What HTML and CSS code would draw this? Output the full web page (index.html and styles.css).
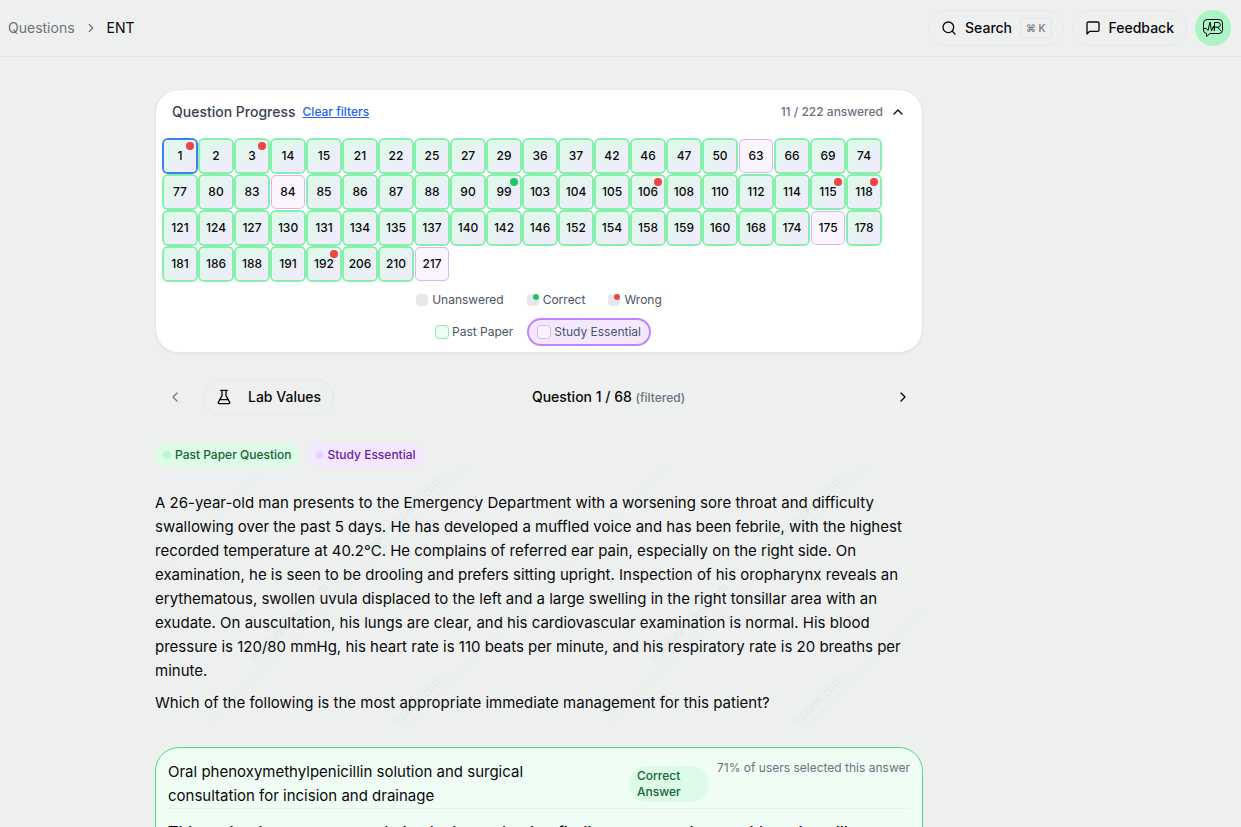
FILE: index.html
```html
<!DOCTYPE html>
<html lang="en">
<head>
  <meta charset="UTF-8">
  <meta name="viewport" content="width=device-width, initial-scale=1.0">
  <title>ENT Questions</title>
  <link rel="stylesheet" href="styles.css">
</head>
<body>
  <header class="topbar">
    <nav class="breadcrumb" aria-label="Breadcrumb">
      <a href="#">Questions</a>
      <svg class="icon-sm" viewBox="0 0 24 24"><path d="m9 18 6-6-6-6"/></svg>
      <span class="current">ENT</span>
    </nav>
    <div class="topbar-actions">
      <button type="button" class="btn search-btn">
        <svg class="icon" viewBox="0 0 24 24"><circle cx="11" cy="11" r="8"/><path d="m21 21-4.3-4.3"/></svg>
        Search
        <kbd>⌘ K</kbd>
      </button>
      <button type="button" class="btn feedback-btn">
        <svg class="icon" viewBox="0 0 24 24"><path d="M21 15a2 2 0 0 1-2 2H7l-4 4V5a2 2 0 0 1 2-2h14a2 2 0 0 1 2 2z"/></svg>
        Feedback
      </button>
      <button type="button" class="avatar" aria-label="Account">
        <svg viewBox="0 0 22 20">
          <path d="M5 1.500h12a3.500 3.500 0 0 1 3.500 3.500v7a3.500 3.500 0 0 1-3.500 3.500H8L4.500 18.500v-3A3.500 3.500 0 0 1 1.500 12V5A3.500 3.500 0 0 1 5 1.500z"/>
          <path d="M2 10.500h2.500L6 12.500 8 4l1.500 9L11.500 8l1 5V4.500h3.500a2.300 2.300 0 0 1 0 4.700h-3M15.500 9.200l3.500 3.800"/>
        </svg>
      </button>
    </div>
  </header>

  <main class="page">
    <section class="card progress">
      <div class="progress-head">
        <h2>Question Progress</h2>
        <a href="#" class="clear">Clear filters</a>
        <span class="answered">11 / 222 answered</span>
        <button type="button" class="toggle" aria-label="Collapse">
          <svg class="icon" viewBox="0 0 24 24"><path d="m18 15-6-6-6 6"/></svg>
        </button>
      </div>
      <div id="questionGrid" class="question-grid"></div>
      <div class="legend">
        <span class="legend-item"><i class="swatch"></i>Unanswered</span>
        <span class="legend-item"><i class="swatch correct"></i>Correct</span>
        <span class="legend-item"><i class="swatch wrong"></i>Wrong</span>
      </div>
      <div class="legend filters">
        <button type="button" class="filter"><i class="swatch paper"></i>Past Paper</button>
        <button type="button" class="filter active"><i class="swatch essential"></i>Study Essential</button>
      </div>
    </section>

    <div class="question-nav">
      <div class="nav-left">
        <button type="button" class="arrow" aria-label="Previous question" disabled>
          <svg class="icon" viewBox="0 0 24 24"><path d="m15 18-6-6 6-6"/></svg>
        </button>
        <button type="button" class="btn lab-btn">
          <svg class="icon" viewBox="0 0 24 24"><path d="M7 2h10M9 2v8L3.500 20a1.500 1.500 0 0 0 1.300 2h14.400a1.500 1.500 0 0 0 1.300-2L15 10V2M6 16h12"/></svg>
          Lab Values
        </button>
      </div>
      <h1>Question 1 / 68 <small>(filtered)</small></h1>
      <button type="button" class="arrow" aria-label="Next question">
        <svg class="icon" viewBox="0 0 24 24"><path d="m9 18 6-6-6-6"/></svg>
      </button>
    </div>

    <div class="tags">
      <span class="tag tag-paper">Past Paper Question</span>
      <span class="tag tag-essential">Study Essential</span>
    </div>

    <article class="question">
      <svg class="watermark" aria-hidden="true">
        <defs>
          <pattern id="mark" width="400" height="200" patternUnits="userSpaceOnUse">
            <text transform="translate(252 50) rotate(-45)">medrevisions.com</text>
            <text transform="translate(137 158) rotate(-45)">medrevisions.com</text>
            <path d="M0 113 113 0M113 200 313 0M313 200 400 113"/>
          </pattern>
        </defs>
        <rect width="100%" height="100%" fill="url(#mark)"/>
      </svg>
      <p>A 26-year-old man presents to the Emergency Department with a worsening sore throat and difficulty swallowing over the past 5 days. He has developed a muffled voice and has been febrile, with the highest recorded temperature at 40.2°C. He complains of referred ear pain, especially on the right side. On examination, he is seen to be drooling and prefers sitting upright. Inspection of his oropharynx reveals an erythematous, swollen uvula displaced to the left and a large swelling in the right tonsillar area with an exudate. On auscultation, his lungs are clear, and his cardiovascular examination is normal. His blood pressure is 120/80 mmHg, his heart rate is 110 beats per minute, and his respiratory rate is 20 breaths per minute.</p>
      <p>Which of the following is the most appropriate immediate management for this patient?</p>
    </article>

    <section class="answer">
      <div class="answer-head">
        <h3>Oral phenoxymethylpenicillin solution and surgical consultation for incision and drainage</h3>
        <span class="answer-badge">Correct Answer</span>
        <span class="percent">71% of users selected this answer</span>
      </div>
      <p class="explanation">This patient's symptoms and physical examination findings are consistent with peritonsillar abscess, also known as quinsy.</p>
    </section>
  </main>

  <script>
    const questions = [
      1, 2, 3, 14, 15, 21, 22, 25, 27, 29, 36, 37, 42, 46, 47, 50, 63, 66, 69, 74,
      77, 80, 83, 84, 85, 86, 87, 88, 90, 99, 103, 104, 105, 106, 108, 110, 112, 114, 115, 118,
      121, 124, 127, 130, 131, 134, 135, 137, 140, 142, 146, 152, 154, 158, 159, 160, 168, 174, 175, 178,
      181, 186, 188, 191, 192, 206, 210, 217
    ];
    const essentialOnly = [63, 84, 175, 217];
    const wrong = [1, 3, 106, 115, 118, 192];
    const correct = [99];

    const grid = document.getElementById('questionGrid');
    questions.forEach(number => {
      const cell = document.createElement('button');
      cell.type = 'button';
      cell.className = 'cell';
      cell.textContent = number;
      if (essentialOnly.includes(number)) cell.classList.add('essential');
      if (wrong.includes(number)) cell.classList.add('wrong');
      if (correct.includes(number)) cell.classList.add('correct');
      if (number === 1) cell.classList.add('selected');
      grid.appendChild(cell);
    });
  </script>
</body>
</html>
```
FILE: styles.css
```css
* {
  box-sizing: border-box;
}
body {
  margin: 0;
  background: #eef0ef;
  color: #09090b;
  font-family: Inter, "Liberation Sans", sans-serif;
  font-size: 15px;
  line-height: 24px;
}
h1, h2, h3, p {
  margin: 0;
}
button {
  font: inherit;
  color: inherit;
  background: none;
  border: none;
  padding: 0;
  cursor: pointer;
}
svg {
  fill: none;
  stroke: currentColor;
  stroke-width: 2;
  stroke-linecap: round;
  stroke-linejoin: round;
}
.icon {
  width: 16px;
  height: 16px;
}
.icon-sm {
  width: 14px;
  height: 14px;
}

/* top bar */
.topbar {
  display: flex;
  align-items: center;
  justify-content: space-between;
  height: 57px;
  padding: 0 10px 0 8px;
  border-bottom: 1px solid #e4e6e6;
}
.breadcrumb {
  display: flex;
  align-items: center;
  gap: 9px;
  font-size: 14px;
  color: #71717a;
}
.breadcrumb a {
  color: inherit;
  text-decoration: none;
}
.breadcrumb .current {
  color: #09090b;
}
.topbar-actions {
  display: flex;
  gap: 8px;
}
.btn {
  display: flex;
  align-items: center;
  height: 36px;
  padding: 0 12px;
  border: 1px solid #e6e8e8;
  border-radius: 18px;
  font-size: 14px;
  font-weight: 500;
}
.search-btn,
.feedback-btn {
  gap: 8px;
}
.search-btn {
  padding-right: 11px;
}
kbd {
  padding: 0 5px;
  border: 1px solid #e2e4e6;
  border-radius: 4px;
  font-family: Inter, "DejaVu Sans", sans-serif;
  font-size: 10px;
  line-height: 18px;
  color: #71717a;
}
.avatar {
  display: flex;
  align-items: center;
  justify-content: center;
  width: 36px;
  height: 36px;
  border-radius: 50%;
  background: #abf5c5;
}
.avatar svg {
  width: 22px;
  height: 20px;
  stroke-width: 1;
}

/* page column */
.page {
  max-width: 931px;
  margin: 0 auto;
  padding: 32px 163px 0 0;
}
.card {
  padding: 8px 8px 6px;
  background: #fff;
  border: 1px solid #e5e7eb;
  border-radius: 24px;
  box-shadow: 0 1px 2px rgba(0, 0, 0, 0.05);
}
.progress-head {
  display: flex;
  align-items: center;
  gap: 7px;
  height: 28px;
  padding: 0 8px;
  font-size: 12px;
  font-weight: 500;
}
.progress-head h2 {
  font-size: 14px;
  font-weight: 500;
  color: #374151;
}
.clear {
  color: #2563eb;
}
.answered {
  margin-left: auto;
  color: #6b7280;
}
.toggle {
  display: flex;
}
.question-grid {
  display: flex;
  flex-wrap: wrap;
  gap: 4px;
  padding: 14px 0 12px;
}
.cell {
  position: relative;
  width: 32px;
  height: 32px;
  border-radius: 4px;
  background: linear-gradient(135deg, #dcfce7, #f3e8ff);
  box-shadow: 0 0 0 2px #86efac;
  font-size: 12px;
  font-weight: 500;
}
.cell.essential {
  background: #faf5ff;
  box-shadow: 0 0 0 1px #d8b4fe;
}
.cell.selected {
  box-shadow: 0 0 0 2px #3b82f6;
  z-index: 1;
}
.cell.wrong::after,
.cell.correct::after {
  content: "";
  position: absolute;
  top: 2px;
  right: 2px;
  width: 8px;
  height: 8px;
  border-radius: 50%;
  background: #ef4444;
}
.cell.correct::after {
  background: #22c55e;
}

/* legend */
.legend {
  display: flex;
  justify-content: center;
  gap: 23px;
  font-size: 12px;
  line-height: 16px;
  color: #4b5563;
}
.legend-item {
  display: flex;
  align-items: center;
  gap: 4px;
}
.swatch {
  position: relative;
  width: 12px;
  height: 12px;
  border-radius: 4px;
  background: #e5e7eb;
}
.swatch.correct::after,
.swatch.wrong::after {
  content: "";
  position: absolute;
  top: 0;
  right: 0;
  width: 6px;
  height: 6px;
  border-radius: 50%;
  background: #22c55e;
}
.swatch.wrong::after {
  background: #ef4444;
}
.filters {
  gap: 6px;
  padding-top: 10px;
}
.filter {
  display: flex;
  align-items: center;
  gap: 3px;
  height: 28px;
  padding: 0 8px;
  border-radius: 14px;
}
.filter.active {
  background: #f3e8ff;
  border: 2px solid #c084fc;
}
.swatch.paper,
.swatch.essential {
  width: 14px;
  height: 14px;
  border: 1px solid #86efac;
  background: #f0fdf4;
}
.swatch.essential {
  border-color: #d8b4fe;
  background: #faf5ff;
}

/* question navigation */
.question-nav {
  display: flex;
  align-items: center;
  justify-content: space-between;
  padding: 26px 0;
}
.nav-left {
  display: flex;
  gap: 8px;
}
.arrow {
  display: flex;
  align-items: center;
  justify-content: center;
  width: 40px;
  height: 36px;
}
.arrow:disabled {
  opacity: 0.5;
}
.lab-btn {
  gap: 16px;
}
.question-nav h1 {
  font-size: 14px;
  font-weight: 500;
}
.question-nav small {
  font-size: 12px;
  color: #6b7280;
}

/* tags */
.tags {
  display: flex;
  gap: 8px;
  padding-top: 2px;
}
.tag {
  display: flex;
  align-items: center;
  gap: 4px;
  padding: 0 8px;
  border-radius: 12px;
  font-size: 12px;
  font-weight: 500;
}
.tag::before {
  content: "";
  width: 8px;
  height: 8px;
  border-radius: 50%;
}
.tag-paper {
  background: #dcfce7;
  color: #166534;
}
.tag-paper::before {
  background: #bbf7d0;
}
.tag-essential {
  background: #f3e8ff;
  color: #6b21a8;
}
.tag-essential::before {
  background: #e9d5ff;
}

/* question text */
.question {
  position: relative;
  padding: 24px 0 8px;
}
.question p + p {
  margin-top: 8px;
}
.watermark {
  position: absolute;
  inset: 0;
  width: 100%;
  height: 100%;
  pointer-events: none;
  stroke: none;
}
.watermark text {
  font-size: 12px;
  text-anchor: middle;
  fill: #10b981;
  opacity: 0.09;
}
.watermark path {
  stroke: #10b981;
  stroke-width: 1;
  opacity: 0.05;
}

/* answer */
.answer {
  margin-top: 24px;
  padding: 12px;
  border: 1px solid #4ade80;
  border-radius: 24px;
  background: #f0fdf4;
}
.answer-head {
  display: flex;
  align-items: flex-start;
  gap: 8px;
  border-bottom: 1px solid #e9f2ee;
}
.answer-head h3 {
  flex: 1;
  padding-right: 64px;
  font-size: 15px;
  font-weight: 400;
}
.answer-badge {
  width: 80px;
  margin-top: 6px;
  padding: 2px 8px;
  border-radius: 18px;
  background: #dcfce7;
  color: #166534;
  font-size: 12px;
  font-weight: 500;
  line-height: 16px;
}
.percent {
  font-size: 12px;
  line-height: 16px;
  color: #6b7280;
}
.explanation {
  padding-top: 11px;
  font-size: 16px;
  font-weight: 500;
}
```
